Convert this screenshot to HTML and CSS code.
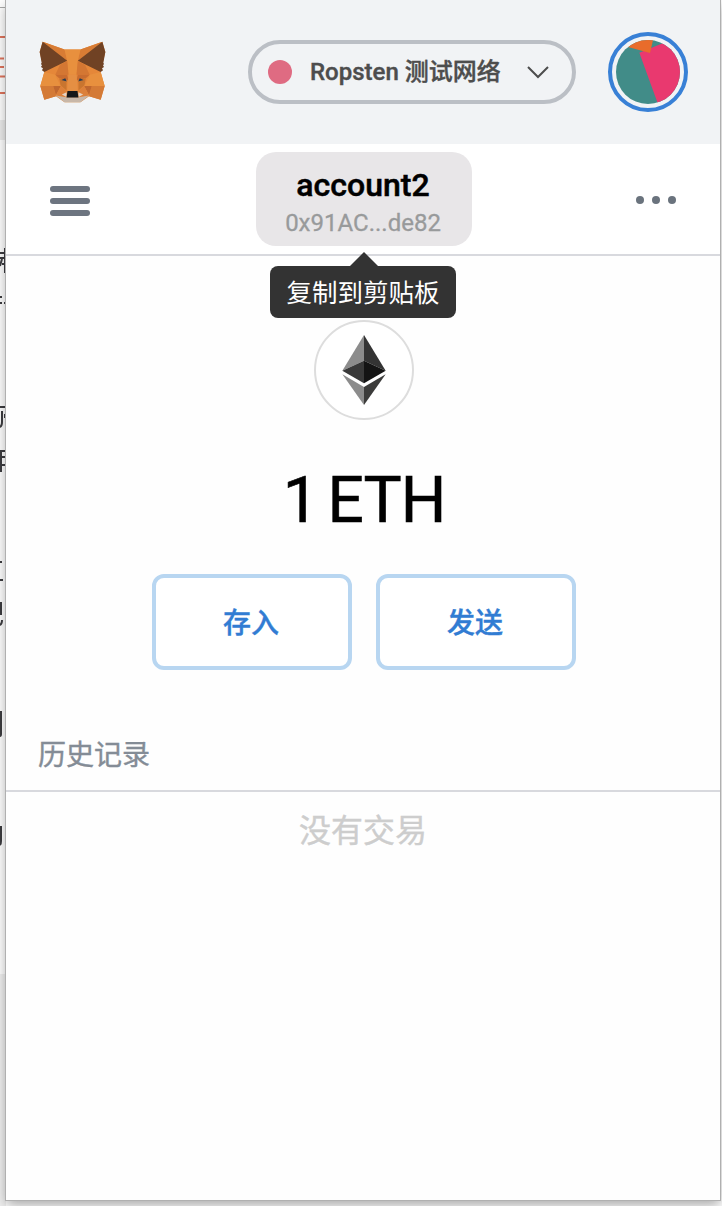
FILE: index.html
```html
<!DOCTYPE html>
<html lang="zh-CN">
<head>
<meta charset="utf-8">
<title>MetaMask</title>
<link rel="stylesheet" href="styles.css">
</head>
<body>
<svg class="page-behind" width="6" height="1206" viewBox="0 0 6 1206" aria-hidden="true">
  <rect width="6" height="120" fill="#fff"/>
  <path d="M0 7.500h6" stroke="#aaa"/>
  <path d="M0 37h6M0 58.500h4M0 67h4M0 76.500h5M0 93h6" stroke="#df745d" stroke-width="2" fill="none"/>
  <rect y="120" width="6" height="20" fill="#ececec"/>
  <rect y="974" width="6" height="232" fill="#f0f0f0"/>
  <g stroke="#3c3c40" stroke-width="2" fill="none">
    <path d="M0 253h6M5 248v25M0 258h6M2 259l-2 7M2 264h4M0 297h2M5 297h1M0 303h2M4 303h2M5 316h1"/>
    <path d="M0 407h6M2 411v11q0 4-2 5M5 414v4M0 451h6M0 457h6M1 451v21M0 465h6"/>
    <path d="M0 562h2M0 580h3M1 602v13M2 620q0 4-2 5M1 711v23q0 2-1 2M1 826v15q0 3-1 4"/>
  </g>
</svg>
<main class="popup">
  <header class="topbar">
    <svg class="fox" viewBox="27 33 202 186" aria-label="MetaMask">
      <path fill="#e58739" d="M38 35 104 58H152L218 35 227 66 213 126 225 168 213 210 178 199 152 217H104L78 199 43 210 31 168 43 126 29 66Z"/>
      <path fill="#d87c34" d="M38 35 104 58 112 92ZM218 35 152 58 144 92Z"/>
      <path fill="#e8903e" d="M104 58H152L144 92 140 134H116L112 92Z"/>
      <path fill="#704224" d="M38 35 112 92 43 126 36 121 39 115 33 111 36 106 33 102 35 98 29 66ZM218 35 144 92 213 126 220 121 217 115 223 111 220 106 223 102 221 98 227 66Z"/>
      <path fill="#d47733" d="M90 105 112 92 116 134H76ZM166 105 144 92 140 134H180Z"/>
      <path fill="#c96c2f" d="M76 134H112L116 152 88 145ZM180 134H144L140 152 168 145Z"/>
      <path fill="#e8903e" d="M43 126 76 134 92 168H31ZM213 126 180 134 164 168H225Z"/>
      <path fill="#d47a36" d="M31 168H70L78 199 43 210ZM225 168H186L178 199 213 210Z"/>
      <path fill="#bf672f" d="M70 168H93L78 195ZM186 168H163L178 195Z"/>
      <path fill="#dc803a" d="M93 168 110 185 104 203 78 197ZM163 168 146 185 152 203 178 197Z"/>
      <path fill="#e58f43" d="M116 134H140L144 183H112Z"/>
      <path fill="#c9752f" d="M88 145 110 156 110 182 92 166ZM168 145 146 156 146 182 164 166Z"/>
      <path fill="#293c51" d="M94 150 106 145 111 155ZM162 150 150 145 145 155Z"/>
      <path fill="#c8b7a8" d="M78 197 109 202H147L178 197 152 217H104Z"/>
      <path fill="#e3d3c5" d="M96 194 110 187V201ZM160 194 146 187V201Z"/>
      <path fill="#151719" d="M113 183H143L146 203H110Z"/>
    </svg>
    <div class="network">
      <span class="network-dot"></span>
      <span class="network-name">Ropsten 测试网络</span>
      <svg class="chevron" viewBox="0 0 24 16"><path d="M2 3 12 13 22 3" fill="none" stroke="#4d4d4d" stroke-width="2"/></svg>
    </div>
    <div class="avatar">
      <svg viewBox="48 48 192 192">
        <path fill="#418c88" d="M48 48H240V240H48Z"/>
        <path fill="#e9396f" d="M118 86 190 57 250 60V240H174Z"/>
        <path fill="#e96c2b" d="M76 67 150 87 161 40H76Z"/>
      </svg>
    </div>
  </header>
  <nav class="menubar">
    <div class="burger"><i></i><i></i><i></i></div>
    <div class="account">
      <div class="account-name">account2</div>
      <div class="account-address">0x91AC...de82</div>
      <div class="tooltip">复制到剪贴板</div>
    </div>
    <div class="dots"><i></i><i></i><i></i></div>
  </nav>
  <section class="balance">
    <div class="token">
      <svg viewBox="127 75 130 210">
        <path fill="#8c8c8c" d="M192 75V152L127 182Z"/>
        <path fill="#343434" d="M192 75V152L257 182Z"/>
        <path fill="#393939" d="M192 152V220L127 182Z"/>
        <path fill="#141414" d="M192 152V220L257 182Z"/>
        <path fill="#8c8c8c" d="M127 193 192 231V285Z"/>
        <path fill="#3c3c3b" d="M257 193 192 231V285Z"/>
      </svg>
    </div>
    <div class="amount">1 ETH</div>
    <div class="actions">
      <button class="action">存入</button>
      <button class="action">发送</button>
    </div>
  </section>
  <h2 class="history-title">历史记录</h2>
  <p class="history-empty">没有交易</p>
</main>
</body>
</html>
```
FILE: styles.css
```css
* { box-sizing: border-box; }
body {
  margin: 0;
  height: 1206px;
  overflow: hidden;
  position: relative;
  padding-left: 6px;
  background: #fff;
  font-family: Roboto, "Noto Sans CJK SC", sans-serif;
}
.page-behind { position: absolute; left: 0; top: 0; }
.popup {
  position: relative;
  width: 714px;
  height: 1200px;
  background: #fefefe;
  box-shadow: 0 0 0 1px #b0b0b0, 0 5px 12px rgba(0, 0, 0, .35);
}
.topbar {
  display: flex;
  align-items: center;
  height: 144px;
  padding: 0 32px 0 33px;
  background: #f1f3f5;
}
.fox { width: 67px; height: 62px; }
.network {
  display: flex;
  align-items: center;
  width: 328px;
  height: 64px;
  margin-left: 142px;
  padding: 0 22px 0 16px;
  border: 4px solid #bbbfc5;
  border-radius: 32px;
}
.network-dot { width: 24px; height: 24px; border-radius: 50%; background: #df6b82; }
.network-name {
  margin-left: 18px;
  font-size: 24px;
  font-weight: 500;
  line-height: 32px;
  white-space: nowrap;
  color: #4d4d4d;
  -webkit-text-stroke: .4px;
}
.chevron { width: 24px; height: 16px; margin-left: auto; }
.avatar {
  width: 80px;
  height: 80px;
  margin-left: 32px;
  padding: 4px;
  border: 4px solid #3880d6;
  border-radius: 50%;
}
.avatar svg { display: block; width: 64px; height: 64px; border-radius: 50%; }
.menubar {
  display: grid;
  grid-template-columns: 40px 216px 40px;
  column-gap: 166px;
  height: 112px;
  padding: 8px 0 0 44px;
  background: #fff;
  border-bottom: 2px solid #d8d9de;
}
.burger { display: grid; gap: 6px; width: 40px; margin-top: 34px; align-content: start; }
.burger i { height: 6px; border-radius: 3px; background: #6d7580; }
.dots { display: flex; gap: 8px; margin: 44px 0 0 -2px; }
.dots i { flex: none; width: 8px; height: 8px; border-radius: 50%; background: #6a737d; }
.account {
  position: relative;
  width: 216px;
  height: 94px;
  padding-top: 14px;
  border-radius: 20px;
  background: #e8e6e8;
  text-align: center;
}
.account-name {
  padding-right: 2px;
  font-size: 32px;
  font-weight: 500;
  line-height: 38px;
  color: #000;
  -webkit-text-stroke: .5px;
}
.account-address {
  padding-right: 2px;
  font-size: 24px;
  line-height: 39px;
  color: #989a9b;
  -webkit-text-stroke: .3px;
}
.tooltip {
  position: absolute;
  left: 14px;
  top: 114px;
  width: 186px;
  height: 52px;
  border-radius: 8px;
  background: #333;
  color: #fff;
  font-size: 25.5px;
  line-height: 55px;
  white-space: nowrap;
  z-index: 1;
}
.tooltip::before {
  content: "";
  position: absolute;
  left: 80px;
  top: -14px;
  border: 14px solid transparent;
  border-top: 0;
  border-bottom-color: #333;
}
.balance { display: flex; flex-direction: column; align-items: center; padding: 64px 0 0 2px; }
.token {
  display: grid;
  place-items: center;
  width: 100px;
  height: 100px;
  border: 2px solid #ddd;
  border-radius: 50%;
  background: #fff;
}
.token svg { width: 44px; height: 70px; }
.amount {
  margin-top: 42px;
  font-size: 64px;
  line-height: 77px;
  letter-spacing: -1px;
  word-spacing: -5px;
  color: #000;
  -webkit-text-stroke: .6px;
}
.actions { display: flex; gap: 24px; margin-top: 35px; }
.action {
  width: 200px;
  height: 96px;
  padding: 0 2px 2px 0;
  border: 4px solid #b8d6f1;
  border-radius: 12px;
  background: #fff;
  color: #317cd3;
  font-family: inherit;
  font-size: 28px;
  font-weight: 500;
  -webkit-text-stroke: .4px;
}
.history-title {
  height: 122px;
  margin: 0;
  padding: 66px 0 0 32px;
  border-bottom: 2px solid #d8d9de;
  font-size: 28px;
  font-weight: 400;
  line-height: 40px;
  color: #848c96;
  -webkit-text-stroke: .4px;
}
.history-empty {
  margin: 16px 0 0;
  text-align: center;
  font-size: 32px;
  line-height: 46px;
  color: #cdcdcd;
  -webkit-text-stroke: .4px;
}
```
